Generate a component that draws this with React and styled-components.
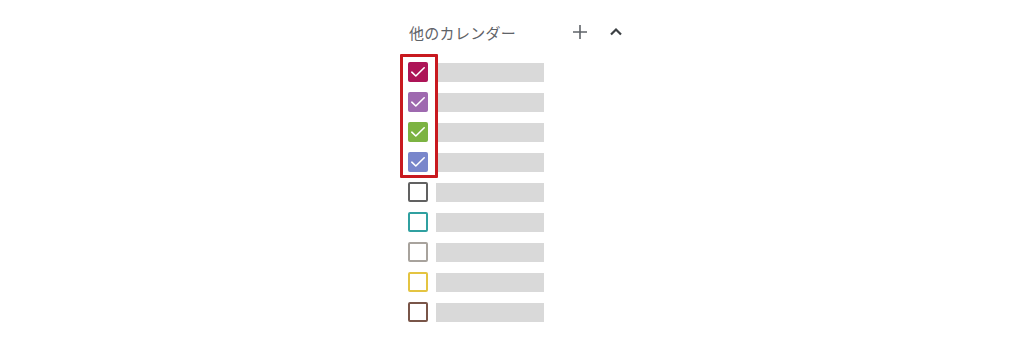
import React from 'react';
import styled, { createGlobalStyle } from 'styled-components';

const GlobalStyle = createGlobalStyle`
  body {
    margin: 0;
    background: #fff;
    font-family: "Noto Sans CJK JP", "Noto Sans", sans-serif;
  }
`;

const calendars = [
  { color: '#ad1457', checked: true },
  { color: '#9e69af', checked: true },
  { color: '#7cb342', checked: true },
  { color: '#7986cb', checked: true },
  { color: '#616161', checked: false },
  { color: '#30a0a0', checked: false },
  { color: '#a8a39d', checked: false },
  { color: '#e4c441', checked: false },
  { color: '#795548', checked: false },
];

const Page = styled.div`
  width: 1024px;
  height: 346px;
  position: relative;
  padding: 20px 0 0 408px;
  box-sizing: border-box;
`;

const Header = styled.div`
  display: flex;
  align-items: center;
  width: 216px;
  height: 24px;
  padding-left: 1px;
  box-sizing: border-box;
`;

const Title = styled.span`
  font-size: 15px;
  color: #5f6368;
  flex: 1;
  letter-spacing: 0.3px;
`;

const IconButton = styled.span`
  display: flex;
  width: 16px;
  height: 16px;
  margin-left: ${p => p.$gap || 0}px;
  align-items: center;
  justify-content: center;
`;

const List = styled.div`
  display: flex;
  flex-direction: column;
  gap: 10px;
  margin-top: 18px;
`;

const Row = styled.div`
  display: flex;
  align-items: center;
  gap: 8px;
  height: 20px;
`;

const Box = styled.span`
  width: 20px;
  height: 20px;
  box-sizing: border-box;
  border-radius: 2px;
  border: 2px solid ${p => p.$color};
  background: ${p => (p.$checked ? p.$color : '#fff')};
  display: flex;
  align-items: center;
  justify-content: center;
`;

const Bar = styled.span`
  width: 108px;
  height: 19px;
  background: #d9d9d9;
`;

const Highlight = styled.div`
  position: absolute;
  left: 400px;
  top: 54px;
  width: 38px;
  height: 124px;
  box-sizing: border-box;
  border: 3px solid #c8191f;
  border-radius: 1px;
`;

const Check = () => (
  <svg width="16" height="16" viewBox="0 0 16 16" fill="none">
    <path d="M1.8 8.2 L5.8 12 L14.2 3.8" stroke="#fff" strokeWidth="1.6" strokeLinecap="round" strokeLinejoin="round" />
  </svg>
);

export default function App() {
  return (
    <>
      <GlobalStyle />
      <Page>
        <Header>
          <Title>他のカレンダー</Title>
          <IconButton>
            <svg width="16" height="16" viewBox="0 0 16 16">
              <path d="M8 1 V15 M1 8 H15" stroke="#5f6368" strokeWidth="1.6" />
            </svg>
          </IconButton>
          <IconButton $gap={20}>
            <svg width="14" height="14" viewBox="0 0 14 14" fill="none">
              <path d="M2 9.5 L7 4.5 L12 9.5" stroke="#3c4043" strokeWidth="2.2" strokeLinejoin="miter" />
            </svg>
          </IconButton>
        </Header>
        <List>
          {calendars.map((c, i) => (
            <Row key={i}>
              <Box $color={c.color} $checked={c.checked}>
                {c.checked && <Check />}
              </Box>
              <Bar />
            </Row>
          ))}
        </List>
        <Highlight />
      </Page>
    </>
  );
}
